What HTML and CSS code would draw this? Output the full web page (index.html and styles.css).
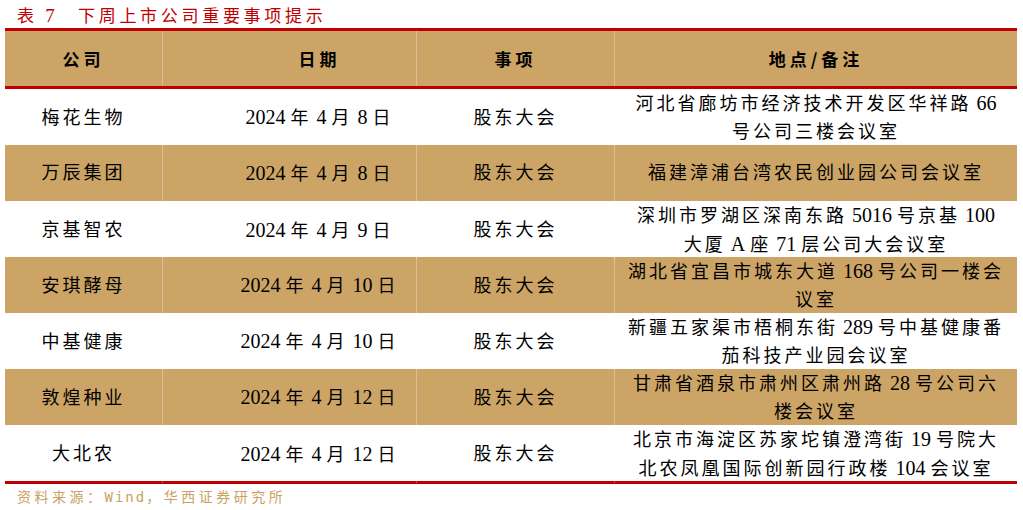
FILE: index.html
```html
<!DOCTYPE html>
<html lang="zh-CN">
<head>
<meta charset="utf-8">
<title>下周上市公司重要事项提示</title>
<link rel="stylesheet" href="styles.css">
</head>
<body>
<div class="page">
  <div class="title"><span class="tno">表 <span class="n">7</span></span><span class="ttext">下周上市公司重要事项提示</span></div>
  <div class="table">
    <div class="row head">
      <div class="cell"><p>公司</p></div>
      <div class="cell date"><p>日期</p></div>
      <div class="cell"><p>事项</p></div>
      <div class="cell"><p>地点/备注</p></div>
    </div>
    <div class="row">
      <div class="cell"><p>梅花生物</p></div>
      <div class="cell date"><p><span class="n">2024</span> 年 <span class="n">4</span> 月 <span class="n">8</span> 日</p></div>
      <div class="cell"><p>股东大会</p></div>
      <div class="cell"><p>河北省廊坊市经济技术开发区华祥路 <span class="n">66</span><br>号公司三楼会议室</p></div>
    </div>
    <div class="row alt">
      <div class="cell"><p>万辰集团</p></div>
      <div class="cell date"><p><span class="n">2024</span> 年 <span class="n">4</span> 月 <span class="n">8</span> 日</p></div>
      <div class="cell"><p>股东大会</p></div>
      <div class="cell"><p>福建漳浦台湾农民创业园公司会议室</p></div>
    </div>
    <div class="row">
      <div class="cell"><p>京基智农</p></div>
      <div class="cell date"><p><span class="n">2024</span> 年 <span class="n">4</span> 月 <span class="n">9</span> 日</p></div>
      <div class="cell"><p>股东大会</p></div>
      <div class="cell"><p>深圳市罗湖区深南东路 <span class="n">5016</span> 号京基 <span class="n">100</span><br>大厦 <span class="n">A</span> 座 <span class="n">71</span> 层公司大会议室</p></div>
    </div>
    <div class="row alt">
      <div class="cell"><p>安琪酵母</p></div>
      <div class="cell date"><p><span class="n">2024</span> 年 <span class="n">4</span> 月 <span class="n">10</span> 日</p></div>
      <div class="cell"><p>股东大会</p></div>
      <div class="cell"><p>湖北省宜昌市城东大道 <span class="n">168</span> 号公司一楼会<br>议室</p></div>
    </div>
    <div class="row">
      <div class="cell"><p>中基健康</p></div>
      <div class="cell date"><p><span class="n">2024</span> 年 <span class="n">4</span> 月 <span class="n">10</span> 日</p></div>
      <div class="cell"><p>股东大会</p></div>
      <div class="cell"><p>新疆五家渠市梧桐东街 <span class="n">289</span> 号中基健康番<br>茄科技产业园会议室</p></div>
    </div>
    <div class="row alt">
      <div class="cell"><p>敦煌种业</p></div>
      <div class="cell date"><p><span class="n">2024</span> 年 <span class="n">4</span> 月 <span class="n">12</span> 日</p></div>
      <div class="cell"><p>股东大会</p></div>
      <div class="cell"><p>甘肃省酒泉市肃州区肃州路 <span class="n">28</span> 号公司六<br>楼会议室</p></div>
    </div>
    <div class="row">
      <div class="cell"><p>大北农</p></div>
      <div class="cell date"><p><span class="n">2024</span> 年 <span class="n">4</span> 月 <span class="n">12</span> 日</p></div>
      <div class="cell"><p>股东大会</p></div>
      <div class="cell"><p>北京市海淀区苏家坨镇澄湾街 <span class="n">19</span> 号院大<br>北农凤凰国际创新园行政楼 <span class="n">104</span> 会议室</p></div>
    </div>
  </div>
  <div class="source"><p>资料来源：<span class="mono">Wind</span>，华西证券研究所</p></div>
</div>
</body>
</html>
```
FILE: styles.css
```css
html, body {
  margin: 0;
  padding: 0;
  background: #ffffff;
}

p {
  margin: 0;
}

.page {
  width: 1012px;
  padding: 0 6px 0 5px;
}

.title {
  height: 28px;
  display: flex;
  align-items: center;
  padding-left: 12px;
  color: #c00000;
  font-family: "Noto Sans CJK SC", sans-serif;
  font-size: 17px;
  letter-spacing: 3.7px;
  white-space: nowrap;
}

.title .n {
  font-family: "Liberation Serif", serif;
  font-size: 19px;
  letter-spacing: 0;
}

.tno {
  width: 61px;
}

.table {
  border-top: 3px solid #c00000;
  border-bottom: 3px solid #c00000;
  font-family: "Liberation Serif", "Noto Sans CJK SC", serif;
  font-size: 18px;
  color: #000;
}

.row {
  display: grid;
  grid-template-columns: 157px 254px 198px 403px;
  height: 56px;
  background: #ffffff;
}

.row.alt {
  background: #cca566;
}

.row.head {
  height: 55px;
  background: #cca566;
  border-bottom: 3px solid #c00000;
  font-family: "Noto Sans CJK SC", sans-serif;
  font-weight: 700;
  font-size: 17px;
}

.cell {
  display: flex;
  align-items: center;
  justify-content: center;
  text-align: center;
  line-height: 28px;
  letter-spacing: 3px;
  word-spacing: -2.5px;
  white-space: nowrap;
  border-left: 1px solid rgba(255, 255, 255, 0.3);
}

.cell.date {
  padding-left: 60px;
}

.row.head .cell {
  letter-spacing: 4px;
}

.cell:first-child {
  border-left: none;
}

.n {
  font-family: "Liberation Serif", serif;
  font-size: 20px;
  letter-spacing: 0;
}

.source {
  height: 24px;
  display: flex;
  align-items: center;
  padding-left: 12px;
  color: #c9a263;
  font-family: "Noto Sans CJK SC", sans-serif;
  font-size: 14px;
  letter-spacing: 3.5px;
  white-space: nowrap;
}

.source .mono {
  font-family: "DejaVu Sans Mono", monospace;
  font-size: 14px;
  letter-spacing: 2px;
}
```
